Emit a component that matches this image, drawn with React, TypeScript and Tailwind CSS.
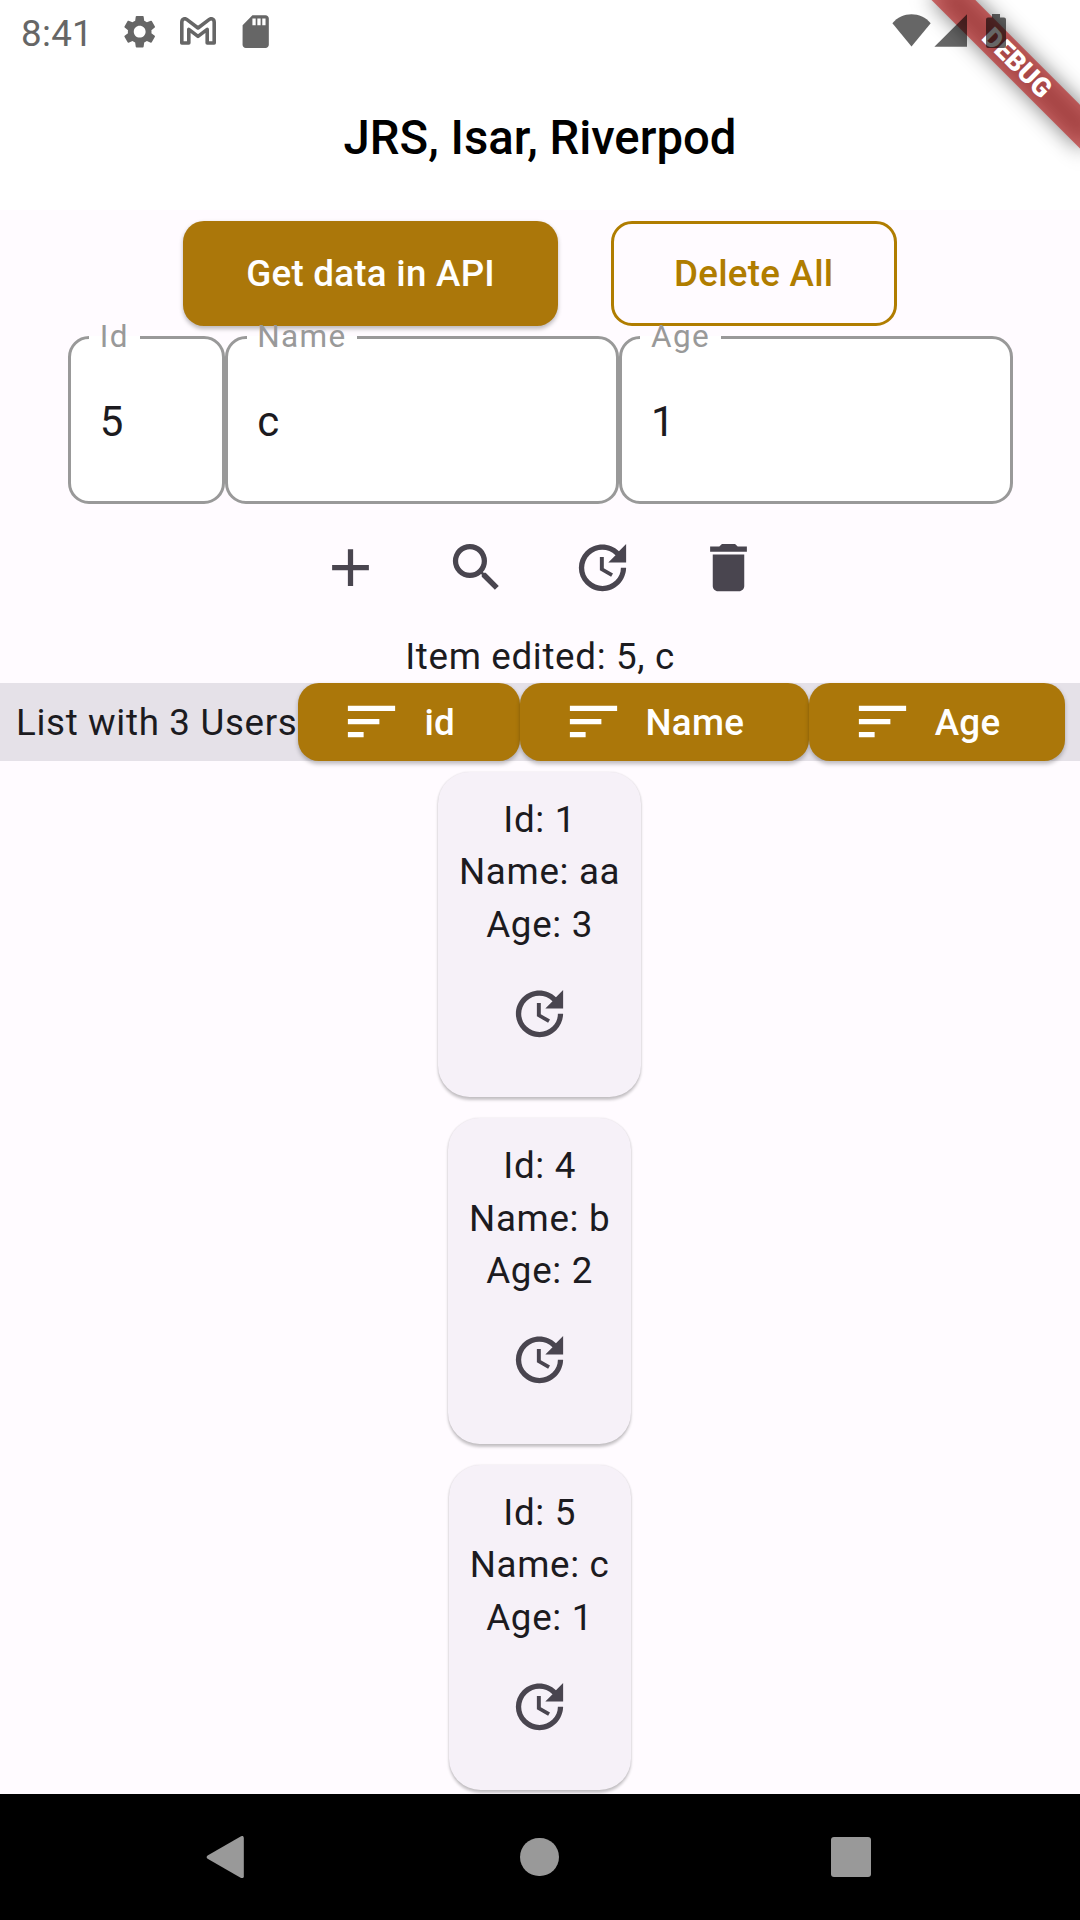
import type { ReactNode } from "react";
import { MdAdd, MdDelete, MdSdCard, MdSearch, MdSettings, MdSort, MdUpdate } from "react-icons/md";

const users = [
  { id: 1, name: "aa", age: 3 },
  { id: 4, name: "b", age: 2 },
  { id: 5, name: "c", age: 1 },
];

function GmailIcon() {
  return (
    <svg viewBox="0 0 36 28" className="h-[28px] w-[36px]" fill="none" stroke="#666666" strokeWidth="3.6" strokeLinejoin="round">
      <path d="M1.8 26V5.2C1.8 2 4.6 .8 7 2.6L18 11 29 2.6C31.4 .8 34.2 2 34.2 5.2V26H27.2V12.4L18 19.4 8.8 12.4V26Z" />
    </svg>
  );
}

function StatusBar() {
  return (
    <header className="flex h-[63px] items-start bg-white">
      <div className="flex h-[63px] items-center pl-[21px] text-[36.75px] leading-[43px] text-[#666666]">
        <span className="w-[99px] pt-[3px] tracking-[0.3px]">8:41</span>
        <div className="flex gap-[18.5px]">
          <MdSettings className="size-[39.4px]" />
          <span className="flex w-[39.4px] items-center justify-center">
            <GmailIcon />
          </span>
          <MdSdCard className="size-[39.4px]" />
        </div>
      </div>
      <svg viewBox="0 0 120 36" className="relative z-20 mt-[13px] ml-auto mr-[70px] h-[36px] w-[120px]" fill="#000000" fillOpacity="0.6">
        <path d="M2.4 10.2C12 -1.8 31 -1.8 40.7 10.2L21.5 33.6Z" />
        <path d="M77 1.2V33.8H44.4Z" />
        <path d="M102 1H110V4.5H114Q116 4.5 116 6.5V33Q116 35 114 35H98Q96 35 96 33V6.5Q96 4.5 98 4.5H102Z" />
      </svg>
    </header>
  );
}

function DebugBanner() {
  return (
    <div className="absolute top-0 right-0 z-10 h-[230px] w-[230px] overflow-hidden">
      <div className="absolute top-0 left-full h-0 w-0 origin-top-left rotate-45">
        <div className="absolute top-[73.5px] left-[-105px] h-[31.5px] w-[210px] bg-black/50 blur-[10.4px]" />
        <div className="absolute top-[73.5px] left-[-105px] flex h-[31.5px] w-[210px] items-center justify-center bg-[#b71c1c]/63 pt-px text-[26.8px] leading-none font-black text-white">
          DEBUG
        </div>
      </div>
    </div>
  );
}

function Field({ label, value, className }: { label: string; value: string; className: string }) {
  return (
    <div className={className}>
      <fieldset className="mt-[-17px] h-[185px] rounded-[21px] border-3 border-[#999999] bg-white">
        <legend className="ml-[18.5px] h-[36px] px-[10.8px] text-[31.5px] leading-[35px] tracking-[1.31px] text-[#999999]">{label}</legend>
        <div className="mt-[42px] px-[29.3px] text-[42px] leading-[49px] tracking-[1.31px] text-[#1c1b1f]">{value}</div>
      </fieldset>
    </div>
  );
}

function IconButton({ children }: { children: ReactNode }) {
  return (
    <button className="flex size-[126px] items-center justify-center pr-[0.3px] text-[63px] text-[#49454f]">{children}</button>
  );
}

function SortButton({ label }: { label: string }) {
  return (
    <button className="flex h-[78.75px] items-center gap-[21px] rounded-[21px] bg-[#ab770a] pr-[64.5px] pl-[42px] font-medium tracking-[0.26px] text-white shadow-[0_2.6px_4px_rgba(0,0,0,0.26)]">
      <MdSort className="size-[63px]" />
      <span className="pt-[2px]">{label}</span>
    </button>
  );
}

export default function App() {
  return (
    <div className="relative flex h-[1920px] w-[1080px] flex-col overflow-hidden bg-[#fffbff] font-[Roboto,sans-serif] text-[36.75px] leading-[52.5px] text-[#1c1b1f]">
      <StatusBar />
      <h1 className="flex h-[147px] shrink-0 items-center justify-center bg-white pt-[3px] text-[47.25px] font-medium text-black">
        JRS, Isar, Riverpod
      </h1>
      <DebugBanner />

      <div className="flex h-[126px] shrink-0 items-center justify-center gap-[52.5px]">
        <button className="h-[105px] rounded-[21px] bg-[#ab770a] px-[63px] pt-[2px] font-medium tracking-[0.26px] text-white shadow-[0_2.6px_4px_rgba(0,0,0,0.26)]">
          Get data in API
        </button>
        <button className="h-[105px] rounded-[21px] border-3 border-[#b07d00] px-[60.4px] pt-[2px] font-medium tracking-[0.26px] text-[#b07d00]">
          Delete All
        </button>
      </div>

      <div className="flex h-[168px] shrink-0 justify-center">
        <Field label="Id" value="5" className="w-[157.5px]" />
        <Field label="Name" value="c" className="w-[393.75px]" />
        <Field label="Age" value="1" className="w-[393.75px]" />
      </div>

      <div className="flex h-[126px] shrink-0 justify-center">
        <IconButton><MdAdd /></IconButton>
        <IconButton><MdSearch /></IconButton>
        <IconButton><MdUpdate /></IconButton>
        <IconButton><MdDelete /></IconButton>
      </div>

      <p className="h-[52.5px] shrink-0 pt-px text-center tracking-[0.66px]">Item edited: 5, c</p>

      <div className="flex h-[78.75px] shrink-0 items-center justify-center bg-[#e5e1e8] pl-[0.8px]">
        <span className="pt-[2px] pr-px tracking-[0.66px]">List with 3 Users</span>
        <SortButton label="id" />
        <SortButton label="Name" />
        <SortButton label="Age" />
      </div>

      <main className="flex flex-1 flex-col items-center gap-[21px] pt-[10.5px] pr-[0.8px]">
        {users.map((user) => (
          <article
            key={user.id}
            className="flex h-[325.5px] flex-col items-center rounded-[31.5px] bg-[#f6f1f8] px-[21px] pt-[22px] tracking-[0.66px] shadow-[0_2.6px_3px_rgba(0,0,0,0.22),0_0_2px_rgba(0,0,0,0.1)]"
          >
            <span>Id: {user.id}</span>
            <span>Name: {user.name}</span>
            <span>Age: {user.age}</span>
            <div className="-mt-px">
              <IconButton><MdUpdate /></IconButton>
            </div>
          </article>
        ))}
      </main>

      <nav className="flex h-[126px] shrink-0 items-center bg-black">
        <svg viewBox="0 0 38 42" className="ml-[206px] h-[42px] w-[38px]" fill="#999999">
          <path d="M34.6 .4Q37.8-1 37.8 2V40.3Q37.8 43 34.6 41.8L1.6 22.8Q-.4 21.2 1.6 19.6Z" />
        </svg>
        <span className="ml-[276.3px] size-[38.4px] rounded-full bg-[#999999]" />
        <span className="ml-[272px] size-[40px] rounded-[3px] bg-[#999999]" />
      </nav>
    </div>
  );
}
